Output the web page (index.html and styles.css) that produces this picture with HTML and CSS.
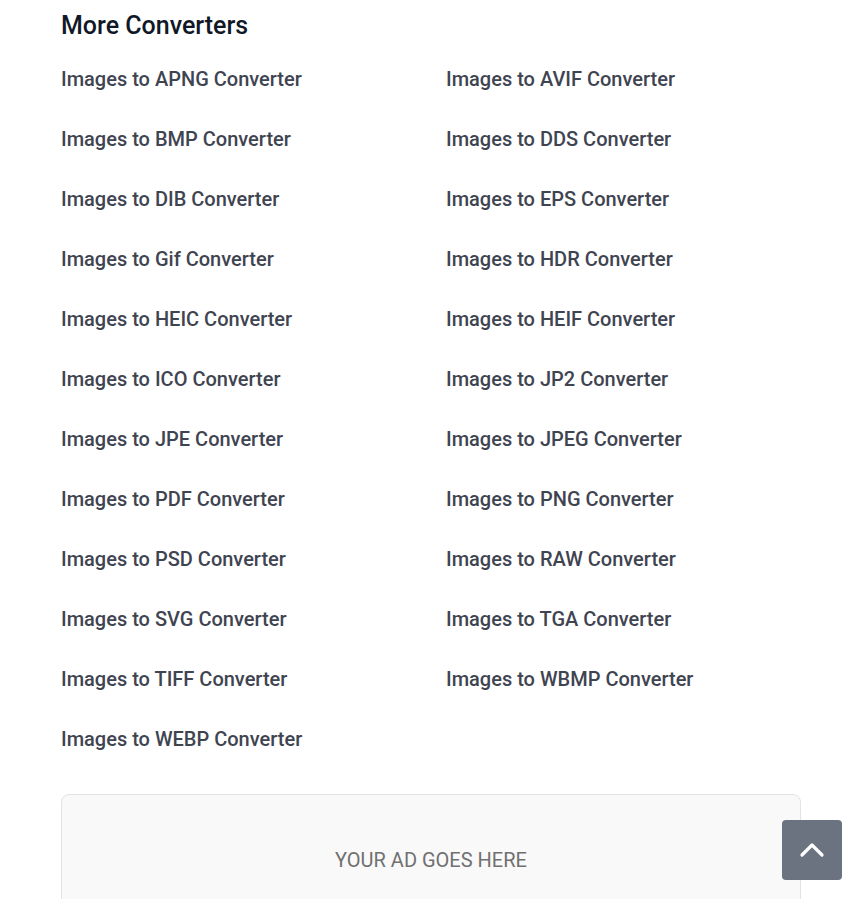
FILE: index.html
```html
<!DOCTYPE html>
<html lang="en">
<head>
<meta charset="utf-8">
<title>More Converters</title>
<link rel="stylesheet" href="styles.css">
</head>
<body>
<main class="wrap">
  <h2 class="title">More Converters</h2>
  <ul class="grid">
    <li><a href="#">Images to APNG Converter</a></li>
    <li><a href="#">Images to AVIF Converter</a></li>
    <li><a href="#">Images to BMP Converter</a></li>
    <li><a href="#">Images to DDS Converter</a></li>
    <li><a href="#">Images to DIB Converter</a></li>
    <li><a href="#">Images to EPS Converter</a></li>
    <li><a href="#">Images to Gif Converter</a></li>
    <li><a href="#">Images to HDR Converter</a></li>
    <li><a href="#">Images to HEIC Converter</a></li>
    <li><a href="#">Images to HEIF Converter</a></li>
    <li><a href="#">Images to ICO Converter</a></li>
    <li><a href="#">Images to JP2 Converter</a></li>
    <li><a href="#">Images to JPE Converter</a></li>
    <li><a href="#">Images to JPEG Converter</a></li>
    <li><a href="#">Images to PDF Converter</a></li>
    <li><a href="#">Images to PNG Converter</a></li>
    <li><a href="#">Images to PSD Converter</a></li>
    <li><a href="#">Images to RAW Converter</a></li>
    <li><a href="#">Images to SVG Converter</a></li>
    <li><a href="#">Images to TGA Converter</a></li>
    <li><a href="#">Images to TIFF Converter</a></li>
    <li><a href="#">Images to WBMP Converter</a></li>
    <li><a href="#">Images to WEBP Converter</a></li>
  </ul>
  <div class="ad">YOUR AD GOES HERE</div>
</main>
<a class="totop" href="#" aria-label="Back to top">
  <svg width="26" height="16" viewBox="0 0 26 16"><path d="M3 13 L13 3 L23 13" fill="none" stroke="#fff" stroke-width="3.2" stroke-linecap="round" stroke-linejoin="round"/></svg>
</a>
</body>
</html>
```
FILE: styles.css
```css
html, body {
  margin: 0;
  padding: 0;
  background: #fff;
  font-family: Roboto, "Liberation Sans", Arial, sans-serif;
  overflow: hidden;
}
.wrap {
  width: 740px;
  margin-left: 61px;
  padding-top: 10px;
}
.title {
  margin: 0;
  font-size: 25px;
  line-height: 32px;
  font-weight: 500;
  color: #111827;
}
.grid {
  list-style: none;
  margin: 23px 0 0;
  padding: 0;
  display: grid;
  grid-template-columns: 1fr 1fr;
  column-gap: 30px;
  row-gap: 32px;
}
.grid li {
  font-size: 20px;
  line-height: 28px;
}
.grid a {
  font-weight: 500;
  color: #3f4451;
  text-decoration: none;
}
.ad {
  margin-top: 41px;
  height: 160px;
  box-sizing: border-box;
  border: 1px solid #e3e3e3;
  border-radius: 8px;
  background: #f9f9f9;
  display: flex;
  justify-content: center;
  padding-top: 51px;
  font-size: 20px;
  line-height: 28px;
  color: #707070;
}
.totop {
  position: fixed;
  left: 782px;
  top: 820px;
  width: 60px;
  height: 60px;
  border-radius: 4px;
  background: #6b7280;
  display: flex;
  align-items: center;
  justify-content: center;
}
```
